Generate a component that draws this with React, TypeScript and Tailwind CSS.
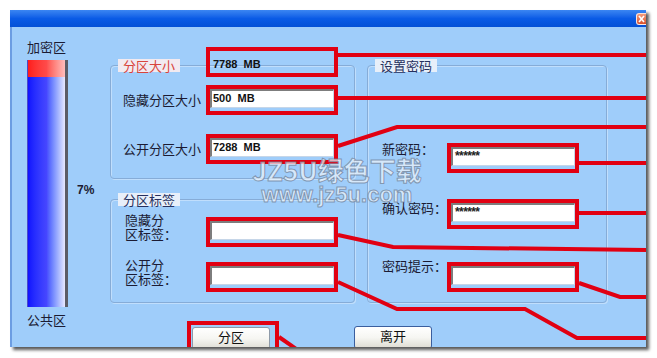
import React from 'react';

const cjk = "font-['Noto_Sans_CJK_SC','Noto_Sans',sans-serif]";
const latin = "font-['Liberation_Sans','Noto_Sans_CJK_SC',sans-serif]";

// red annotation frame round a field
function RedBox({
  className = '',
  wide = true,
  children,
}: {
  className?: string;
  wide?: boolean;
  children?: React.ReactNode;
}) {
  return (
    <div className={`h-[30px] shrink-0 border-[4px] border-[#e10012] ${wide ? 'w-[132px]' : 'w-[92px]'} ${className}`}>
      {children}
    </div>
  );
}

function Field({ value = '', stars = false }: { value?: string; stars?: boolean }) {
  return (
    <div className="h-[19px] border-l-2 border-t-2 border-r border-b border-[#7d7d7d] border-r-[#c6d6e8] border-b-[#c6d6e8] bg-white">
      {stars ? (
        <span className={`${latin} block pl-[2px] text-[12px] font-bold leading-[15px] tracking-[-0.6px] text-[#222]`}>
          {value}
        </span>
      ) : (
        <span className={`${latin} block whitespace-pre pl-[1px] text-[11px] font-bold leading-[15px] text-[#111]`}>
          {value}
        </span>
      )}
    </div>
  );
}

function Group({
  title,
  titleClass,
  className = '',
  children,
}: {
  title: string;
  titleClass: string;
  className?: string;
  children?: React.ReactNode;
}) {
  return (
    <div
      className={`relative shrink-0 rounded-[4px] border border-[#86acd7] shadow-[inset_1px_1px_0_rgba(255,255,255,0.35),1px_1px_0_rgba(255,255,255,0.35)] ${className}`}
    >
      <span className={`${cjk} absolute left-[7px] top-[-7px] h-[13px] px-[5px] text-[13px] leading-[13px] ${titleClass}`}>
        {title}
      </span>
      {children}
    </div>
  );
}

const Label = ({ children, className = '' }: { children: React.ReactNode; className?: string }) => (
  <div className={`${cjk} shrink-0 text-[13px] text-[#1b1b33] ${className}`}>{children}</div>
);

const Button = ({ children, className = '' }: { children: React.ReactNode; className?: string }) => (
  <div
    className={`${cjk} h-[23px] w-[78px] shrink-0 rounded-[3px] border bg-linear-to-b from-white via-[#f6f6f2] to-[#dedcd3] pt-[1px] text-center text-[13px] leading-[15px] text-[#111] ${className}`}
  >
    {children}
  </div>
);

export default function App() {
  return (
    <div className="h-[358px] w-[657px] overflow-hidden bg-white pl-[10px] pt-[10px]">
      <div className="h-[337px] w-[636px] shadow-[3px_3px_3px_rgba(0,0,0,0.65)]">
        {/* title bar */}
        <div className="flex h-[17px] items-start justify-end bg-linear-to-b from-[#3b86f2] via-[#0a5be6] to-[#0450d6] pt-[3px]">
          <div className="h-[12px] w-[10px] rounded-l-[3px] border border-r-0 border-white/80 bg-linear-to-b from-[#f39a7c] to-[#d9502a]">
            <svg width="9" height="10" viewBox="0 0 9 10" className="block">
              <path d="M2 2 L7 8 M7 2 L2 8" stroke="white" strokeWidth="1.6" />
            </svg>
          </div>
        </div>

        {/* body */}
        <div className="relative flex h-[320px] items-start overflow-hidden bg-[#9fcdfa] shadow-[inset_2px_0_0_#6c9de2]">
          {/* level bar */}
          <div className="flex w-[58px] shrink-0 flex-col pl-[17px] pt-[12px]">
            <Label className="leading-[16px]">加密区</Label>
            <div className="mt-[5px] flex h-[247px] w-[41px] flex-col border-l border-r-[3px] border-l-[#4b4bc8] border-r-[#5c5c66]">
              <div className="h-[17px] bg-linear-to-r from-[#ff1a1a] via-[#ff4a4a] to-[#ffbcbc]" />
              <div className="flex-1 bg-linear-to-r from-[#1010ff] via-[#4646ff] to-[#e8e8ff]" />
            </div>
            <Label className="mt-[5px] leading-[16px]">公共区</Label>
          </div>

          <div className={`${latin} w-[42px] shrink-0 pl-[9px] pt-[157px] text-[12px] font-bold leading-[13px] text-[#1b1b33]`}>
            7%
          </div>

          <div className="flex flex-col pt-[38px]">
            <div className="flex gap-[12px]">
              <div className="flex flex-col">
                <Group title="分区大小" titleClass="bg-[#f2eaf0] text-[#d8443c]" className="h-[114px] w-[245px] pl-[12px] pt-[19px]">
                  <RedBox className="absolute left-[95px] top-[-19px]">
                    <div className={`${latin} whitespace-pre pl-[3px] pt-[6px] text-[11px] font-bold leading-[15px] text-[#111]`}>
                      7788  MB
                    </div>
                  </RedBox>
                  <div className="flex items-center">
                    <Label className="w-[83px] leading-[16px]">隐藏分区大小</Label>
                    <RedBox>
                      <Field value="500  MB" />
                    </RedBox>
                  </div>
                  <div className="mt-[19px] flex items-center">
                    <Label className="w-[83px] leading-[16px]">公开分区大小</Label>
                    <RedBox>
                      <Field value="7288  MB" />
                    </RedBox>
                  </div>
                </Group>

                <Group title="分区标签" titleClass="bg-[#e8eff9] text-[#26305e]" className="mt-[20px] h-[104px] w-[245px] pl-[14px] pt-[17px]">
                  <div className="flex items-start">
                    <Label className="-mt-[4px] w-[81px] leading-[14px]">
                      <div>隐藏分</div>
                      <div>区标签：</div>
                    </Label>
                    <RedBox>
                      <Field />
                    </RedBox>
                  </div>
                  <div className="mt-[15px] flex items-start">
                    <Label className="-mt-[4px] w-[81px] leading-[14px]">
                      <div>公开分</div>
                      <div>区标签：</div>
                    </Label>
                    <RedBox>
                      <Field />
                    </RedBox>
                  </div>
                </Group>
              </div>

              <Group title="设置密码" titleClass="bg-[#e8eff9] text-[#26305e]" className="h-[238px] w-[240px] pl-[14px] pt-[77px]">
                <div className="flex items-start">
                  <Label className="-mt-[2px] w-[65px] leading-[16px]">新密码：</Label>
                  <RedBox>
                    <Field value="******" stars />
                  </RedBox>
                </div>
                <div className="mt-[26px] flex items-start">
                  <Label className="mt-[1px] w-[65px] leading-[16px]">确认密码：</Label>
                  <RedBox>
                    <Field value="******" stars />
                  </RedBox>
                </div>
                <div className="mt-[33px] flex items-start">
                  <Label className="-mt-[4px] w-[65px] leading-[16px]">密码提示：</Label>
                  <RedBox>
                    <Field />
                  </RedBox>
                </div>
              </Group>
            </div>

            <div className="mt-[18px] flex items-start pl-[77px]">
              <RedBox wide={false} className="pl-[1px] pt-[2px]">
                <Button className="border-[#8e9aa8]">分区</Button>
              </RedBox>
              <Button className="ml-[75px] mt-[5px] border-[#3a5e9e]">离开</Button>
            </div>
          </div>

          {/* watermark */}
          <div className="pointer-events-none absolute left-[232px] top-[130px] flex w-[190px] flex-col items-center">
            <span className={`${cjk} text-[26px] font-bold leading-[26px] text-[rgba(236,243,251,0.72)] [-webkit-text-stroke:1px_rgba(110,128,152,0.75)]`}>
              JZ5U绿色下载
            </span>
            <span className={`${latin} mt-[1px] text-[22px] font-bold leading-[22px] text-[rgba(236,243,251,0.72)] [-webkit-text-stroke:1px_rgba(110,128,152,0.75)]`}>
              www.jz5u.com
            </span>
          </div>

          {/* annotation lines */}
          <svg className="pointer-events-none absolute left-0 top-0" width="636" height="320" viewBox="0 0 636 320">
            <g fill="none" stroke="#e10012" strokeWidth="4" strokeLinejoin="miter">
              <polyline points="328,28 636,28" />
              <polyline points="328,71 636,71" />
              <polyline points="328,119 387,100 636,100" />
              <polyline points="569,136 636,136" />
              <polyline points="569,186 636,186" />
              <polyline points="328,208 383,220 636,223" />
              <polyline points="328,255 387,282 515,282 567,311 636,311" />
              <polyline points="569,256 610,270 636,270" />
              <polyline points="269,310 292,326" />
            </g>
          </svg>
        </div>
      </div>
    </div>
  );
}
